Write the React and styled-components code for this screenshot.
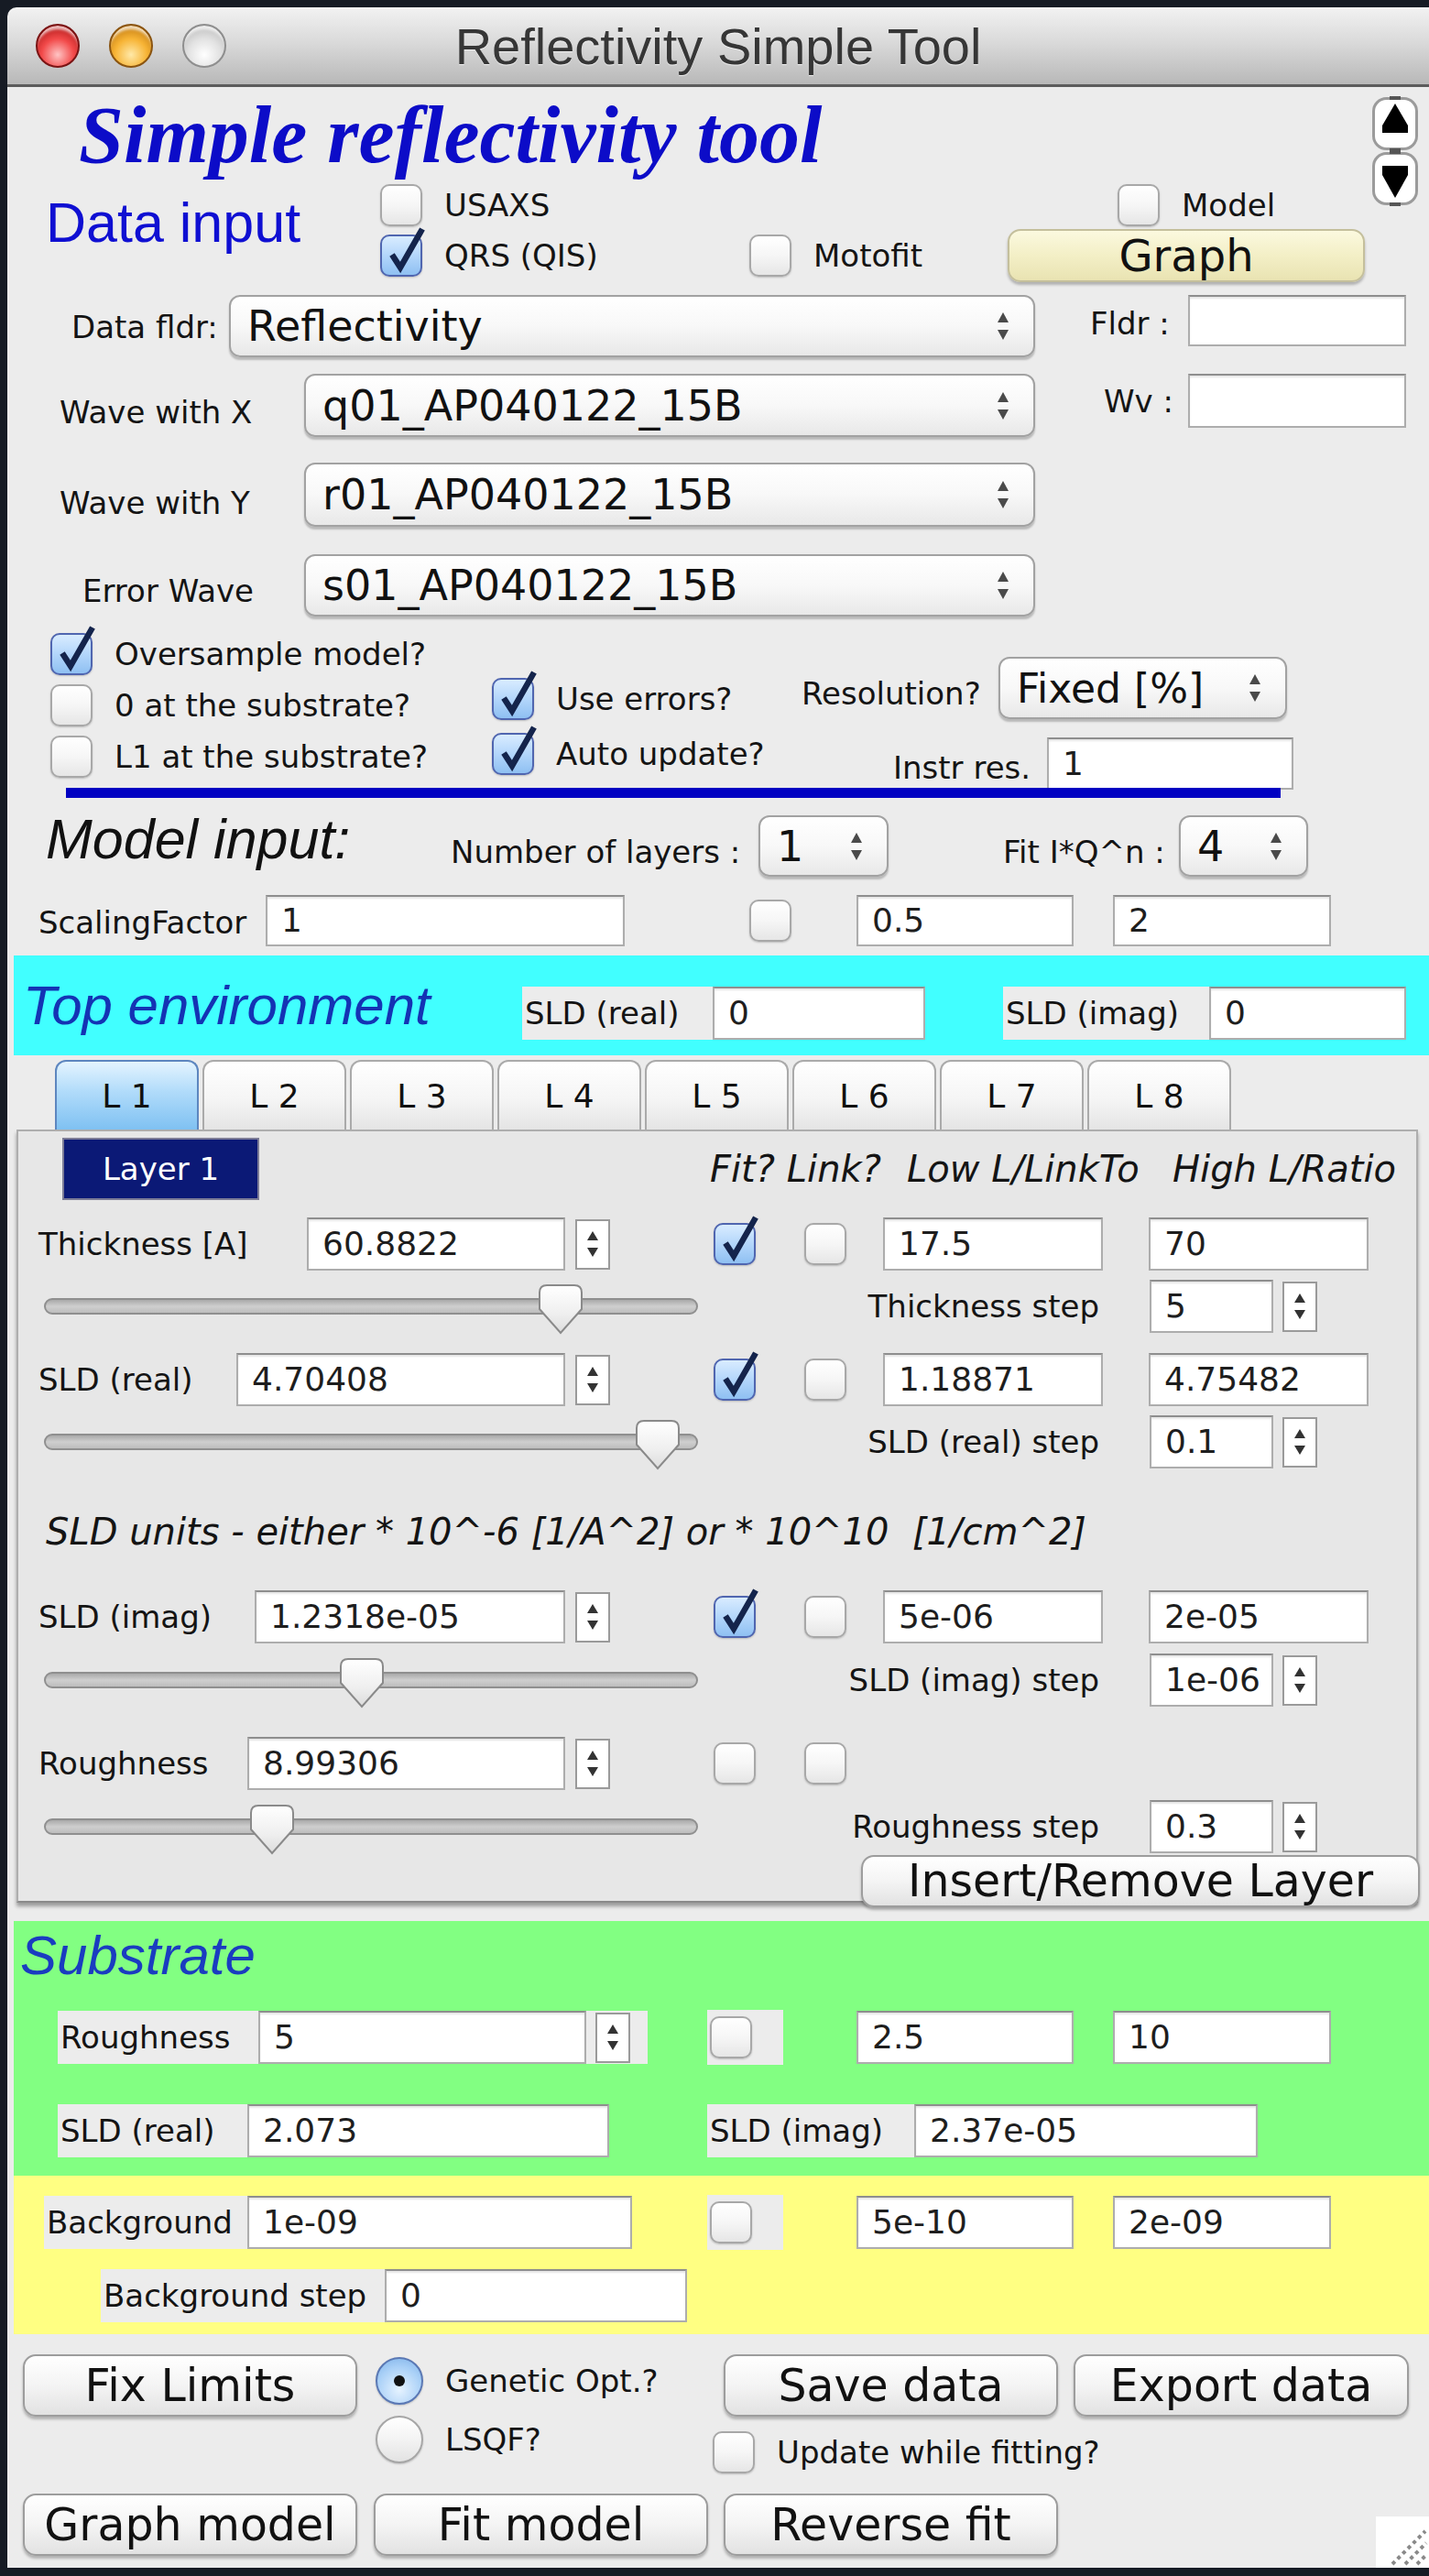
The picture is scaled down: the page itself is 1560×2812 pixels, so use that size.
import React from 'react';
import styled, { createGlobalStyle, css } from 'styled-components';

const GlobalStyle = createGlobalStyle`
  html, body {
    margin: 0;
    padding: 0;
    background: #161b24;
  }
  body {
    font-family: "DejaVu Sans", "Liberation Sans", sans-serif;
  }
`;

const Window = styled.div`
  width: 1560px;
  height: 2812px;
  box-sizing: border-box;
  padding: 8px 0 9px 8px;
  background: #161b24;
  display: flex;
  flex-direction: column;
`;

const TitleBar = styled.div`
  height: 84px;
  flex-shrink: 0;
  display: grid;
  grid-template-columns: 1fr auto 1fr;
  align-items: center;
  background: linear-gradient(#f2f2f2, #dadada 45%, #b8b8b8);
  border-bottom: 3px solid #5c5c5c;
  border-top-left-radius: 10px;
`;

const Lights = styled.div`
  display: flex;
  gap: 32px;
  padding-left: 31px;
`;

const lightColors = {
  red: ['#ffc4c4', '#f24a4a', '#b01818', '#7a1414'],
  orange: ['#ffe9a8', '#f7b436', '#c27a10', '#8a5410'],
  gray: ['#ffffff', '#e2e2e2', '#bdbdbd', '#8e8e8e'],
};

const Light = styled.span`
  width: 48px;
  height: 48px;
  border-radius: 50%;
  box-sizing: border-box;
  ${({ $c }) => {
    const [hi, mid, lo, edge] = lightColors[$c];
    return css`
      background: radial-gradient(circle at 50% 72%, ${hi} 0%, ${mid} 45%, ${lo} 85%);
      border: 2px solid ${edge};
      box-shadow: inset 0 6px 3px -2px rgba(255, 255, 255, 0.7);
    `;
  }}
`;

const WindowTitle = styled.div`
  font-family: "Liberation Sans", Arial, sans-serif;
  font-size: 56px;
  color: #363636;
  text-shadow: 0 1px 0 rgba(255, 255, 255, 0.7);
  white-space: nowrap;
`;

const Body = styled.div`
  flex: 1;
  background: #ececec;
  display: flex;
  flex-direction: column;
  overflow: hidden;
`;

/* ---------- header ---------- */

const Header = styled.div`
  display: flex;
`;

const HeaderMain = styled.div`
  flex: 1;
  display: flex;
  flex-direction: column;
`;

const TitleRow = styled.div`
  height: 101px;
  box-sizing: border-box;
  padding: 9px 0 0 78px;
`;

const AppTitle = styled.div`
  font-family: "Liberation Serif", "Times New Roman", serif;
  font-weight: 700;
  font-style: italic;
  font-size: 88px;
  line-height: 88px;
  color: #0c0cc8;
  white-space: nowrap;
`;

const DataInputGrid = styled.div`
  display: grid;
  grid-template-columns: 407px 403px 282px 1fr;
  grid-template-rows: 55px 56px;
  align-items: center;
`;

const Heading = styled.div`
  font-family: "Liberation Sans", Arial, sans-serif;
  font-size: ${(p) => p.$size || 61}px;
  line-height: ${(p) => p.$size || 61}px;
  font-style: ${(p) => (p.$italic ? 'italic' : 'normal')};
  color: ${(p) => p.$color || '#0f0fd2'};
  white-space: nowrap;
  flex-shrink: 0;
  width: ${(p) => (p.$w ? `${p.$w}px` : 'auto')};
  margin: ${(p) => p.$m || '0'};
  align-self: ${(p) => p.$self || 'auto'};
`;

const DataInputTitle = styled(Heading)`
  grid-row: 1 / span 2;
  grid-column: 1;
  align-self: start;
  margin: 17px 0 0 42px;
`;

const GridCell = styled.div`
  grid-row: ${(p) => p.$row};
  grid-column: ${(p) => p.$col};
  margin-left: ${(p) => p.$ml || 0}px;
  display: flex;
  align-items: center;
`;

const ScrollArrowsBox = styled.div`
  width: 52px;
  height: 120px;
  margin: 10px 11px 0 0;
  flex-shrink: 0;
`;

const ScrollArrows = () => (
  <ScrollArrowsBox>
    <svg width="52" height="120" viewBox="0 0 52 120">
      <rect x="2.5" y="2.5" width="47" height="55" rx="14" fill="#fff" stroke="#9b9b9b" strokeWidth="3" />
      <rect x="2.5" y="62.5" width="47" height="55" rx="14" fill="#fff" stroke="#9b9b9b" strokeWidth="3" />
      <rect x="20" y="0" width="12" height="4" fill="#555" />
      <rect x="20" y="57" width="12" height="6" fill="#555" />
      <rect x="20" y="116" width="12" height="4" fill="#555" />
      <polygon points="26,8 12,32 12,40 40,40 40,32" fill="#000" />
      <polygon points="12,76 40,76 40,86 26,111 12,86" fill="#000" />
    </svg>
  </ScrollArrowsBox>
);

/* ---------- generic controls ---------- */

const Label = styled.div`
  font-family: "DejaVu Sans", sans-serif;
  font-size: ${(p) => p.$size || 34}px;
  color: #141414;
  white-space: pre;
  flex-shrink: 0;
  width: ${(p) => (p.$w ? `${p.$w}px` : 'auto')};
  margin-left: ${(p) => p.$ml || 0}px;
  margin-top: ${(p) => p.$mt || 0}px;
  margin-bottom: ${(p) => p.$mb || 0}px;
  text-align: ${(p) => p.$align || 'left'};
  font-style: ${(p) => (p.$italic ? 'italic' : 'normal')};
`;

const Field = styled.div`
  width: ${(p) => p.$w}px;
  height: ${(p) => p.$h || 58}px;
  margin-left: ${(p) => p.$ml || 0}px;
  align-self: ${(p) => p.$self || 'auto'};
  flex-shrink: 0;
  box-sizing: border-box;
  background: #fff;
  border: 2px solid #adadad;
  border-top-color: #8e8e8e;
  box-shadow: inset 0 2px 2px rgba(0, 0, 0, 0.1);
  padding-left: 15px;
  font-family: "DejaVu Sans", sans-serif;
  font-size: 36px;
  line-height: ${(p) => (p.$h || 58) - 4}px;
  color: #1e1e1e;
  white-space: nowrap;
  overflow: hidden;
`;

const PopupBox = styled.div`
  width: ${(p) => p.$w}px;
  height: ${(p) => p.$h || 68}px;
  margin-left: ${(p) => p.$ml || 0}px;
  flex-shrink: 0;
  box-sizing: border-box;
  display: flex;
  align-items: center;
  justify-content: space-between;
  padding: 0 26px 0 18px;
  border: 2px solid #a2a2a2;
  border-radius: 12px;
  background: linear-gradient(#ffffff, #f8f8f8 50%, #e8e8e8);
  box-shadow: 0 3px 2px rgba(0, 0, 0, 0.22);
`;

const PopupText = styled.span`
  font-family: "DejaVu Sans", sans-serif;
  font-size: ${(p) => p.$size || 46}px;
  color: #111;
  white-space: nowrap;
`;

const Popup = ({ w, h, ml, size, children }) => (
  <PopupBox $w={w} $h={h} $ml={ml}>
    <PopupText $size={size}>{children}</PopupText>
    <svg width="14" height="34" viewBox="0 0 14 34">
      <polygon points="7,2 1,13 13,13" fill="#4a4a4a" />
      <polygon points="1,21 13,21 7,32" fill="#4a4a4a" />
    </svg>
  </PopupBox>
);

const StepperBox = styled.div`
  width: 38px;
  height: 55px;
  margin-left: ${(p) => p.$ml || 0}px;
  flex-shrink: 0;
  box-sizing: border-box;
  background: #fff;
  border: 2px solid #9a9a9a;
  display: flex;
  align-items: center;
  justify-content: center;
`;

const Stepper = ({ ml }) => (
  <StepperBox $ml={ml}>
    <svg width="14" height="34" viewBox="0 0 14 34">
      <polygon points="7,3 1,13 13,13" fill="#333" />
      <polygon points="1,21 13,21 7,31" fill="#333" />
    </svg>
  </StepperBox>
);

const CheckSquare = styled.div`
  position: relative;
  width: 46px;
  height: 46px;
  margin-left: ${(p) => p.$ml || 0}px;
  flex-shrink: 0;
  box-sizing: border-box;
  border-radius: 10px;
  border: 2px solid ${(p) => (p.$on ? '#5066b0' : '#a8a8a8')};
  background: ${(p) =>
    p.$on
      ? 'linear-gradient(#d9ecff, #b3d6fb 50%, #8fc0f2)'
      : 'linear-gradient(#ffffff, #f6f6f6 50%, #e6e6e6)'};
  box-shadow: 0 1px 2px rgba(0, 0, 0, 0.2);
`;

const CheckMark = styled.svg`
  position: absolute;
  left: -2px;
  top: -2px;
  overflow: visible;
`;

const CheckBox = ({ on, ml }) => (
  <CheckSquare $on={on} $ml={ml}>
    {on && (
      <CheckMark width="46" height="46" viewBox="0 0 46 46">
        <path d="M13 22 L22 36 L46 -6" fill="none" stroke="#14244c" strokeWidth="6.5" strokeLinejoin="miter" />
      </CheckMark>
    )}
  </CheckSquare>
);

const CheckItem = styled.div`
  display: flex;
  align-items: center;
  gap: 24px;
  height: ${(p) => p.$h || 56}px;
  margin-left: ${(p) => p.$ml || 0}px;
  margin-top: ${(p) => p.$mt || 0}px;
`;

const RadioDot = styled.div`
  width: 52px;
  height: 52px;
  border-radius: 50%;
  box-sizing: border-box;
  flex-shrink: 0;
  display: flex;
  align-items: center;
  justify-content: center;
  border: 2px solid ${(p) => (p.$on ? '#5a78b4' : '#a6a6a6')};
  background: ${(p) =>
    p.$on
      ? 'radial-gradient(circle at 50% 70%, #e6f3ff, #a9d0f7 60%, #7cb0e8)'
      : 'linear-gradient(#ffffff, #f3f3f3 50%, #e3e3e3)'};
  box-shadow: 0 1px 2px rgba(0, 0, 0, 0.2);

  &::after {
    content: '';
    display: ${(p) => (p.$on ? 'block' : 'none')};
    width: 12px;
    height: 12px;
    border-radius: 50%;
    background: #111;
  }
`;

const Button = styled.div`
  width: ${(p) => p.$w}px;
  height: ${(p) => p.$h || 68}px;
  margin-left: ${(p) => p.$ml || 0}px;
  flex-shrink: 0;
  box-sizing: border-box;
  display: flex;
  align-items: center;
  justify-content: center;
  border: 2px solid ${(p) => (p.$tone === 'yellow' ? '#c4bf9c' : '#9d9d9d')};
  border-radius: 14px;
  background: ${(p) =>
    p.$tone === 'yellow'
      ? 'linear-gradient(#fbf9df, #f3efc6 50%, #e9e3b2)'
      : 'linear-gradient(#ffffff, #f4f4f4 50%, #e2e2e2)'};
  box-shadow: 0 3px 3px rgba(0, 0, 0, 0.25);
  font-family: "DejaVu Sans", sans-serif;
  font-size: ${(p) => p.$size || 49}px;
  color: #111;
  white-space: nowrap;
`;

/* ---------- data rows ---------- */

const Row = styled.div`
  display: flex;
  align-items: ${(p) => p.$align || 'center'};
  height: ${(p) => p.$h}px;
  margin-top: ${(p) => p.$mt || 0}px;
  margin-left: ${(p) => p.$ml || 0}px;
  flex-shrink: 0;
`;

const OptionsBlock = styled.div`
  display: flex;
  align-items: flex-start;
  height: 174px;
  margin-top: 13px;
  flex-shrink: 0;
`;

const OptionCol = styled.div`
  display: flex;
  flex-direction: column;
  width: ${(p) => (p.$w ? `${p.$w}px` : 'auto')};
  margin-left: ${(p) => p.$ml || 0}px;
  padding-top: ${(p) => p.$pt || 0}px;
  gap: ${(p) => p.$gap || 0}px;
  flex-shrink: 0;
`;

const BlueRule = styled.div`
  width: 1326px;
  height: 11px;
  margin-left: 64px;
  background: #0000c2;
  flex-shrink: 0;
`;

/* ---------- bands ---------- */

const Band = styled.div`
  margin-left: 7px;
  margin-top: ${(p) => p.$mt || 0}px;
  height: ${(p) => p.$h}px;
  box-sizing: border-box;
  padding-top: ${(p) => p.$pt || 0}px;
  background: ${(p) => p.$bg};
  flex-shrink: 0;
  display: flex;
  flex-direction: ${(p) => p.$dir || 'column'};
  align-items: ${(p) => (p.$dir === 'row' ? 'flex-start' : 'stretch')};
`;

const BoxLabel = styled.div`
  width: ${(p) => p.$w}px;
  height: 58px;
  margin-left: ${(p) => p.$ml || 0}px;
  flex-shrink: 0;
  box-sizing: border-box;
  padding-left: 3px;
  background: #ececec;
  font-family: "DejaVu Sans", sans-serif;
  font-size: 34px;
  line-height: 58px;
  color: #141414;
  white-space: nowrap;
`;

const ControlPad = styled.div`
  width: ${(p) => p.$w}px;
  height: ${(p) => p.$h || 58}px;
  margin-left: ${(p) => p.$ml || 0}px;
  flex-shrink: 0;
  box-sizing: border-box;
  padding-left: ${(p) => p.$pl || 0}px;
  background: #ececec;
  display: flex;
  align-items: center;
`;

const BandGroup = styled.div`
  display: flex;
  margin-left: ${(p) => p.$ml || 0}px;
  margin-top: 34px;
`;

/* ---------- tabs ---------- */

const TabStrip = styled.div`
  display: flex;
  gap: 4px;
  margin: 5px 0 0 52px;
  height: 76px;
  flex-shrink: 0;
`;

const Tab = styled.div`
  width: 157px;
  height: 76px;
  box-sizing: border-box;
  border: 2px solid ${(p) => (p.$active ? '#5d86bf' : '#aaaaaa')};
  border-bottom: none;
  border-radius: 12px 12px 0 0;
  background: ${(p) =>
    p.$active
      ? 'linear-gradient(#e4f4ff, #b0dbfa 45%, #7fc1f2)'
      : 'linear-gradient(#ffffff, #f5f5f5 55%, #e4e4e4)'};
  display: flex;
  align-items: center;
  justify-content: center;
  font-family: "DejaVu Sans", sans-serif;
  font-size: 36px;
  color: #111;
  white-space: pre;
`;

const TabPanel = styled.div`
  position: relative;
  margin-left: 10px;
  width: 1530px;
  height: 844px;
  box-sizing: border-box;
  border: 2px solid #aeaeae;
  border-bottom-color: #8a8a8a;
  background: #e7e7e7;
  box-shadow: 0 4px 4px rgba(0, 0, 0, 0.35);
  display: flex;
  flex-direction: column;
  flex-shrink: 0;
`;

const LayerBadge = styled.div`
  width: 215px;
  height: 68px;
  margin-left: 48px;
  box-sizing: border-box;
  background: #0b1976;
  border: 2px solid #7c7c96;
  color: #fff;
  font-family: "DejaVu Sans", sans-serif;
  font-size: 34px;
  display: flex;
  align-items: center;
  justify-content: center;
`;

const Track = styled.div`
  position: relative;
  width: 714px;
  height: 18px;
  margin-left: 28px;
  flex-shrink: 0;
  box-sizing: border-box;
  border: 2px solid #8f8f8f;
  border-radius: 9px;
  background: linear-gradient(#a9a9a9, #cfcfcf 50%, #bdbdbd);
`;

const ThumbSvg = styled.svg`
  position: absolute;
  top: -19px;
`;

const Slider = ({ frac }) => (
  <Track>
    <ThumbSvg width="52" height="57" viewBox="0 0 52 57" style={{ left: frac * 714 - 28 }}>
      <defs>
        <linearGradient id="thumbFill" x1="0" y1="0" x2="0" y2="1">
          <stop offset="0" stopColor="#ffffff" />
          <stop offset="0.6" stopColor="#efefef" />
          <stop offset="1" stopColor="#dcdcdc" />
        </linearGradient>
      </defs>
      <path d="M3 11 Q3 3 11 3 H41 Q49 3 49 11 V29 L26 55 L3 29 Z" fill="url(#thumbFill)" stroke="#8a8a8a" strokeWidth="2" />
    </ThumbSvg>
  </Track>
);

const InsertButton = styled(Button)`
  position: absolute;
  right: -4px;
  bottom: -7px;
`;

const ResizeGrip = styled.div`
  width: 58px;
  height: 56px;
  margin-left: auto;
  align-self: flex-end;
  margin-bottom: -13px;
  background: #fff;
  display: flex;
  align-items: flex-end;
  justify-content: flex-end;
`;

const ParamRow = ({ label, inputX, value, fit, low, high, mt }) => (
  <Row $h={58} $mt={mt}>
    <Label $ml={22} $w={inputX - 42}>{label}</Label>
    <Field $w={617 - inputX}>{value}</Field>
    <Stepper ml={11} />
    <CheckBox on={fit} ml={113} />
    <CheckBox ml={53} />
    {low !== undefined && (
      <>
        <Field $ml={40} $w={240}>{low}</Field>
        <Field $ml={50} $w={240}>{high}</Field>
      </>
    )}
  </Row>
);

const SliderRow = ({ frac, stepLabel, step, mt }) => (
  <Row $h={58} $mt={mt}>
    <Slider frac={frac} />
    <Label $w={438} $align="right">{stepLabel}</Label>
    <Field $ml={55} $w={135}>{step}</Field>
    <Stepper ml={10} />
  </Row>
);

const tabs = ['L 1', 'L 2', 'L 3', 'L 4', 'L 5', 'L 6', 'L 7', 'L 8'];

const App = () => (
  <>
    <GlobalStyle />
    <Window>
      <TitleBar>
        <Lights>
          <Light $c="red" />
          <Light $c="orange" />
          <Light $c="gray" />
        </Lights>
        <WindowTitle>Reflectivity Simple Tool</WindowTitle>
        <div />
      </TitleBar>

      <Body>
        <Header>
          <HeaderMain>
            <TitleRow>
              <AppTitle>Simple reflectivity tool</AppTitle>
            </TitleRow>
            <DataInputGrid>
              <DataInputTitle>Data input</DataInputTitle>
              <GridCell $row={1} $col={2}>
                <CheckItem>
                  <CheckBox />
                  <Label>USAXS</Label>
                </CheckItem>
              </GridCell>
              <GridCell $row={2} $col={2}>
                <CheckItem>
                  <CheckBox on />
                  <Label>QRS (QIS)</Label>
                </CheckItem>
              </GridCell>
              <GridCell $row={2} $col={3}>
                <CheckItem>
                  <CheckBox />
                  <Label>Motofit</Label>
                </CheckItem>
              </GridCell>
              <GridCell $row={1} $col={4} $ml={120}>
                <CheckItem>
                  <CheckBox />
                  <Label>Model</Label>
                </CheckItem>
              </GridCell>
              <GridCell $row={2} $col={4}>
                <Button $w={390} $h={58} $tone="yellow" $size={48}>Graph</Button>
              </GridCell>
            </DataInputGrid>
          </HeaderMain>
          <ScrollArrows />
        </Header>

        <Row $h={68} $mt={15}>
          <Label $ml={70} $w={172} $mt={2}>Data fldr:</Label>
          <Popup w={880} h={68}>Reflectivity</Popup>
          <Label $ml={60} $w={107} $mt={-6}>Fldr :</Label>
          <Field $w={238} $h={56} $self="flex-start" />
        </Row>
        <Row $h={69} $mt={18}>
          <Label $ml={57} $w={267} $mt={15}>Wave with X</Label>
          <Popup w={798} h={69}>q01_AP040122_15B</Popup>
          <Label $ml={75} $w={92} $mb={9}>Wv :</Label>
          <Field $w={238} $h={59} $self="flex-start" />
        </Row>
        <Row $h={70} $mt={28}>
          <Label $ml={57} $w={267} $mt={18}>Wave with Y</Label>
          <Popup w={798} h={70}>r01_AP040122_15B</Popup>
        </Row>
        <Row $h={68} $mt={30}>
          <Label $ml={82} $w={242} $mt={12}>Error Wave</Label>
          <Popup w={798} h={68}>s01_AP040122_15B</Popup>
        </Row>

        <OptionsBlock>
          <OptionCol $ml={47} $w={482}>
            <CheckItem $h={56}>
              <CheckBox on />
              <Label>Oversample model?</Label>
            </CheckItem>
            <CheckItem $h={56}>
              <CheckBox />
              <Label>0 at the substrate?</Label>
            </CheckItem>
            <CheckItem $h={56}>
              <CheckBox />
              <Label>L1 at the substrate?</Label>
            </CheckItem>
          </OptionCol>
          <OptionCol $w={338} $pt={49} $gap={4}>
            <CheckItem $h={56}>
              <CheckBox on />
              <Label>Use errors?</Label>
            </CheckItem>
            <CheckItem $h={56}>
              <CheckBox on />
              <Label>Auto update?</Label>
            </CheckItem>
          </OptionCol>
          <OptionCol $pt={31} $gap={20}>
            <Row $h={68}>
              <Label $w={215} $mt={12}>Resolution?</Label>
              <Popup w={315} h={68} size={44}>Fixed [%]</Popup>
            </Row>
            <Row $h={57}>
              <Label $ml={100} $w={168} $mt={8}>Instr res.</Label>
              <Field $w={269} $h={57}>1</Field>
            </Row>
          </OptionCol>
        </OptionsBlock>
        <BlueRule />

        <Row $h={77} $mt={14}>
          <Heading $italic $color="#111" $w={442} $m="0 0 14px 42px">Model input:</Heading>
          <Label $w={336} $mt={13}>Number of layers :</Label>
          <Popup w={142} h={67}>1</Popup>
          <Label $ml={125} $w={192} $mt={13}>Fit I*Q^n :</Label>
          <Popup w={141} h={67}>4</Popup>
        </Row>
        <Row $h={56} $mt={15}>
          <Label $ml={34} $w={248} $mt={4}>ScalingFactor</Label>
          <Field $w={392} $h={56}>1</Field>
          <CheckBox ml={136} />
          <Field $ml={71} $w={237} $h={56}>0.5</Field>
          <Field $ml={43} $w={238} $h={56}>2</Field>
        </Row>

        <Band $bg="#41ffff" $h={109} $mt={10} $dir="row">
          <Heading $italic $color="#1433b4" $size={60} $w={545} $m="0 0 0 10px" $self="center">
            Top environment
          </Heading>
          <BandGroup>
            <BoxLabel $w={208}>SLD (real)</BoxLabel>
            <Field $w={232}>0</Field>
          </BandGroup>
          <BandGroup $ml={85}>
            <BoxLabel $w={225}>SLD (imag)</BoxLabel>
            <Field $w={215}>0</Field>
          </BandGroup>
        </Band>

        <TabStrip>
          {tabs.map((t, i) => (
            <Tab key={t} $active={i === 0}>{t}</Tab>
          ))}
        </TabStrip>
        <TabPanel>
          <Row $h={68} $mt={7}>
            <LayerBadge>Layer 1</LayerBadge>
            <Label $italic $size={40} $ml={492} $w={215}>Fit? Link?</Label>
            <Label $italic $size={40} $w={290}>Low L/LinkTo</Label>
            <Label $italic $size={40}>High L/Ratio</Label>
          </Row>
          <ParamRow mt={19} label="Thickness [A]" inputX={335} value="60.8822" fit low="17.5" high="70" />
          <SliderRow mt={10} frac={0.79} stepLabel="Thickness step" step="5" />
          <ParamRow mt={22} label="SLD (real)" inputX={258} value="4.70408" fit low="1.18871" high="4.75482" />
          <SliderRow mt={10} frac={0.938} stepLabel="SLD (real) step" step="0.1" />
          <Row $h={58} $mt={40}>
            <Label $italic $size={40} $ml={30}>SLD units - either * 10^-6 [1/A^2] or * 10^10  [1/cm^2]</Label>
          </Row>
          <ParamRow mt={35} label="SLD (imag)" inputX={278} value="1.2318e-05" fit low="5e-06" high="2e-05" />
          <SliderRow mt={11} frac={0.486} stepLabel="SLD (imag) step" step="1e-06" />
          <ParamRow mt={33} label="Roughness" inputX={270} value="8.99306" />
          <SliderRow mt={11} frac={0.349} stepLabel="Roughness step" step="0.3" />
          <InsertButton $w={610} $h={57}>Insert/Remove Layer</InsertButton>
        </TabPanel>

        <Band $bg="#82ff82" $h={278} $mt={20} $pt={8}>
          <Heading $italic $color="#1a3cc0" $size={60} $m="0 0 0 7px">Substrate</Heading>
          <Row $h={62} $mt={28}>
            <BoxLabel $ml={48} $w={219}>Roughness</BoxLabel>
            <Field $w={358}>5</Field>
            <ControlPad $w={67} $pl={10}>
              <Stepper />
            </ControlPad>
            <ControlPad $ml={65} $w={83} $h={60} $pl={3}>
              <CheckBox />
            </ControlPad>
            <Field $ml={80} $w={237}>2.5</Field>
            <Field $ml={43} $w={238}>10</Field>
          </Row>
          <Row $h={58} $mt={42}>
            <BoxLabel $ml={48} $w={207}>SLD (real)</BoxLabel>
            <Field $w={395}>2.073</Field>
            <BoxLabel $ml={107} $w={226}>SLD (imag)</BoxLabel>
            <Field $w={375}>2.37e-05</Field>
          </Row>
        </Band>

        <Band $bg="#ffff82" $h={173} $pt={20}>
          <Row $h={62}>
            <BoxLabel $ml={33} $w={222}>Background</BoxLabel>
            <Field $w={420}>1e-09</Field>
            <ControlPad $ml={82} $w={83} $h={60} $pl={3}>
              <CheckBox />
            </ControlPad>
            <Field $ml={80} $w={237}>5e-10</Field>
            <Field $ml={43} $w={238}>2e-09</Field>
          </Row>
          <Row $h={58} $mt={20}>
            <BoxLabel $ml={95} $w={310}>Background step</BoxLabel>
            <Field $w={330}>0</Field>
          </Row>
        </Band>

        <Row $h={130} $mt={22} $align="flex-start">
          <Button $ml={17} $w={365}>Fix Limits</Button>
          <OptionCol $ml={20} $w={368} $gap={6}>
            <CheckItem $h={58}>
              <RadioDot $on />
              <Label>Genetic Opt.?</Label>
            </CheckItem>
            <CheckItem $h={58}>
              <RadioDot />
              <Label>LSQF?</Label>
            </CheckItem>
          </OptionCol>
          <OptionCol>
            <Row $h={68}>
              <Button $ml={12} $w={365}>Save data</Button>
              <Button $ml={17} $w={366}>Export data</Button>
            </Row>
            <CheckItem $h={47} $mt={15}>
              <CheckBox />
              <Label>Update while fitting?</Label>
            </CheckItem>
          </OptionCol>
        </Row>
        <Row $h={68} $mt={22}>
          <Button $ml={17} $w={365}>Graph model</Button>
          <Button $ml={18} $w={365}>Fit model</Button>
          <Button $ml={17} $w={365}>Reverse fit</Button>
          <ResizeGrip>
            <svg width="46" height="44" viewBox="0 0 46 44">
              <g stroke="#8a8a8a" strokeWidth="4" strokeDasharray="4 4">
                <line x1="6" y1="40" x2="42" y2="4" />
                <line x1="20" y1="40" x2="43" y2="17" />
                <line x1="33" y1="40" x2="43" y2="30" />
              </g>
            </svg>
          </ResizeGrip>
        </Row>
      </Body>
    </Window>
  </>
);

export default App;
